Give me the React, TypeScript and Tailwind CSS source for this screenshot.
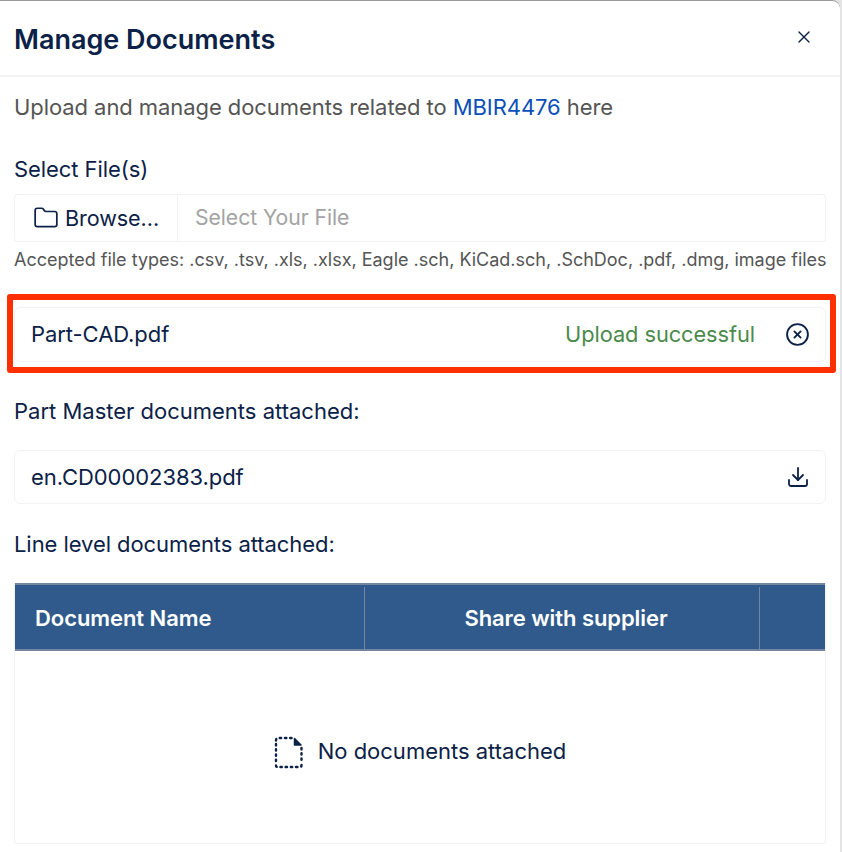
import { Download, Folder, X, CircleX } from "lucide-react"

function DashedFile() {
  return (
    <svg width="30" height="34" viewBox="0 0 30 34" fill="none" stroke="#0b2147" strokeWidth="2.4" strokeLinecap="round">
      <path d="M2 9v18M2 30.500q0 1.500 1.500 1.500M27.500 30v.5q0 1.500-1.500 1.500H5M27.500 13v15M2 5.500q0-2.500 2.500-2.500H18" strokeDasharray="1.400 3.800" />
      <path d="M20.500 3.500l6.500 6.500h-6.500z" fill="#0b2147" strokeWidth="1.500" strokeLinejoin="round" />
    </svg>
  )
}

export default function App() {
  return (
    <div className="h-[852px] w-[842px] overflow-hidden bg-[#e4e4e4] pr-[2px] font-['Inter',sans-serif] text-[#0b2147]">
      <div className="relative h-[852px] rounded-tr-lg border-t border-[#9a9a9a] bg-white">
        <header className="flex h-[76px] items-center justify-between border-b-2 border-[#f3f4f6] pr-[26px] pl-[14px]">
          <h1 className="pt-[3px] text-[27px] leading-none font-semibold">Manage Documents</h1>
          <X size={20} strokeWidth={1.6} className="mb-[3px]" />
        </header>

        <div className="px-[14px] text-[22px] tracking-[-0.07px]">
          <p className="mt-[16px] leading-7 text-[#555555]">
            Upload and manage documents related to <span className="text-[#0b4fb8]">MBIR4476</span> here
          </p>

          <p className="mt-[34px] leading-7">Select File(s)</p>
          <div className="mt-[11px] flex h-[48px] rounded border border-[#f1f2f4]">
            <div className="flex w-[163px] items-center justify-center gap-[6px] border-r border-[#f1f2f4] text-[21.6px]">
              <Folder size={26} strokeWidth={1.6} />
              Browse...
            </div>
            <div className="flex flex-1 items-center pl-[17px] text-[21.2px] text-[#a3a3a3]">Select Your File</div>
          </div>
          <p className="mt-[8px] text-[18px] leading-5 tracking-[-0.005px] whitespace-nowrap text-[#555555]">
            Accepted file types: .csv, .tsv, .xls, .xlsx, Eagle .sch, KiCad.sch, .SchDoc, .pdf, .dmg, image files
          </p>

          <div className="mt-[37px] flex h-[55px] items-center rounded-md border border-[#f1f2f4] pr-[15px] pl-4">
            <span className="flex-1">Part-CAD.pdf</span>
            <span className="text-[21.8px] text-[#4b8a4b]">Upload successful</span>
            <CircleX size={25} strokeWidth={1.8} className="ml-[30px]" />
          </div>

          <p className="mt-[35px] leading-7 tracking-normal">Part Master documents attached:</p>
          <div className="mt-[25px] flex h-[54px] items-center justify-between rounded-md border border-[#f1f2f4] pr-[15px] pl-4">
            <span>en.CD00002383.pdf</span>
            <Download size={24} strokeWidth={1.8} />
          </div>

          <p className="mt-[26px] leading-7">Line level documents attached:</p>

          <div className="mt-[25px] h-[261px] rounded-b border border-t-0 border-[#f1f2f4]">
            <div className="flex h-[68px] border-y-2 border-[#76859f] bg-[#2f5a8b] pt-[2px] font-semibold text-white">
              <div className="flex w-[350px] items-center border-r border-[#76859f] pl-[20px]">Document Name</div>
              <div className="flex w-[395px] items-center justify-center border-r border-[#76859f] pl-2">Share with supplier</div>
              <div className="flex-1" />
            </div>
            <div className="flex h-[193px] items-center justify-center gap-[14px] pt-2 tracking-normal">
              <DashedFile />
              No documents attached
            </div>
          </div>
        </div>

        <div className="pointer-events-none absolute top-[293px] left-[7px] h-[79px] w-[829px] rounded-[3px] border-[6px] border-[#ff2f00]" />
      </div>
    </div>
  )
}
